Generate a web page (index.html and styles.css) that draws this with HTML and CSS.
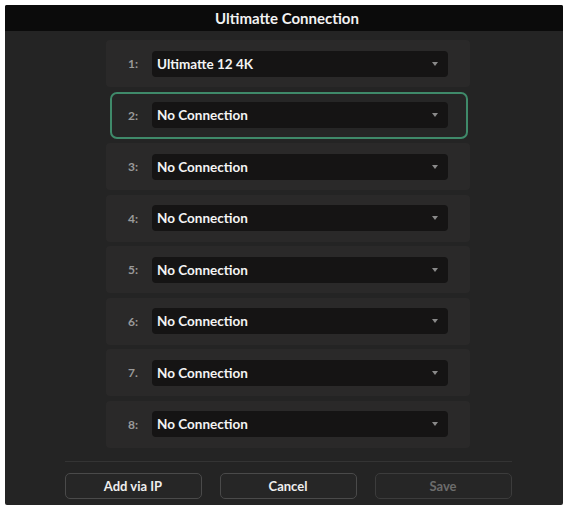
FILE: index.html
```html
<!DOCTYPE html>
<html>
<head>
  <meta charset="UTF-8">
  <link rel="stylesheet" href="styles.css">
</head>
<body>
  <div class="window">
    <div class="titlebar">Ultimatte Connection</div>

    <div class="content">
      <div class="slots">
        <div class="slot">
          <span class="slot-num">1:</span>
          <div class="select"><span>Ultimatte 12 4K</span><span class="arrow"></span></div>
        </div>
        <div class="slot active">
          <span class="slot-num">2:</span>
          <div class="select"><span>No Connection</span><span class="arrow"></span></div>
        </div>
        <div class="slot">
          <span class="slot-num">3:</span>
          <div class="select"><span>No Connection</span><span class="arrow"></span></div>
        </div>
        <div class="slot">
          <span class="slot-num">4:</span>
          <div class="select"><span>No Connection</span><span class="arrow"></span></div>
        </div>
        <div class="slot">
          <span class="slot-num">5:</span>
          <div class="select"><span>No Connection</span><span class="arrow"></span></div>
        </div>
        <div class="slot">
          <span class="slot-num">6:</span>
          <div class="select"><span>No Connection</span><span class="arrow"></span></div>
        </div>
        <div class="slot">
          <span class="slot-num">7.</span>
          <div class="select"><span>No Connection</span><span class="arrow"></span></div>
        </div>
        <div class="slot">
          <span class="slot-num">8:</span>
          <div class="select"><span>No Connection</span><span class="arrow"></span></div>
        </div>
      </div>

      <div class="footer">
        <button class="btn">Add via IP</button>
        <button class="btn">Cancel</button>
        <button class="btn" disabled>Save</button>
      </div>
    </div>
  </div>
</body>
</html>
```

FILE: styles.css
```css
body {
  margin: 0;
  background: #fff;
  font-family: Lato, "Open Sans", "Liberation Sans", sans-serif;
}

.window {
  margin: 5px;
  width: 558px;
  height: 500px;
  background: #242424;
  border-radius: 2px;
  overflow: hidden;
  display: flex;
  flex-direction: column;
}

.titlebar {
  height: 26px;
  background: #0b0b0b;
  color: #f2f2f2;
  font-size: 15px;
  font-weight: 700;
  display: flex;
  align-items: center;
  justify-content: center;
  padding-left: 6px;
}

.content {
  flex: 1;
  display: flex;
  flex-direction: column;
  align-items: center;
}

.slots {
  margin-top: 9px;
  width: 364px;
  margin-left: 8px;
  display: flex;
  flex-direction: column;
  gap: 4.5px;
}

.slot {
  height: 47px;
  background: #2a2929;
  border-radius: 4px;
  display: flex;
  align-items: center;
  box-sizing: border-box;
  padding-left: 22px;
}

.slot.active {
  border: 2px solid #3f8a6a;
  border-radius: 7px;
  padding-left: 16px;
  width: 358px;
  margin-left: 4px;
  background: #262626;
}

.slot-num {
  width: 24px;
  color: #9a9a9a;
  font-size: 12px;
  font-weight: 700;
}

.select {
  width: 296px;
  height: 26px;
  background: #151414;
  border-radius: 4px;
  display: flex;
  align-items: center;
  justify-content: space-between;
  padding: 0 10px 0 5px;
  box-sizing: border-box;
  color: #f4f4f4;
  font-size: 13.5px;
  font-weight: 700;
}

.arrow {
  width: 0;
  height: 0;
  border-left: 3.5px solid transparent;
  border-right: 3.5px solid transparent;
  border-top: 4px solid #8a8a8a;
}

.footer {
  margin-top: 13px;
  margin-left: 8px;
  width: 447px;
  border-top: 1px solid #343434;
  padding-top: 11px;
  display: flex;
  gap: 18px;
}

.btn {
  flex: 1;
  height: 26px;
  background: #262626;
  border: 1px solid #4a4a4a;
  border-radius: 5px;
  color: #eeeeee;
  font-family: inherit;
  font-size: 13px;
  font-weight: 700;
}

.btn:disabled {
  color: #6c6c6c;
  border-color: #3c3c3c;
}
```
